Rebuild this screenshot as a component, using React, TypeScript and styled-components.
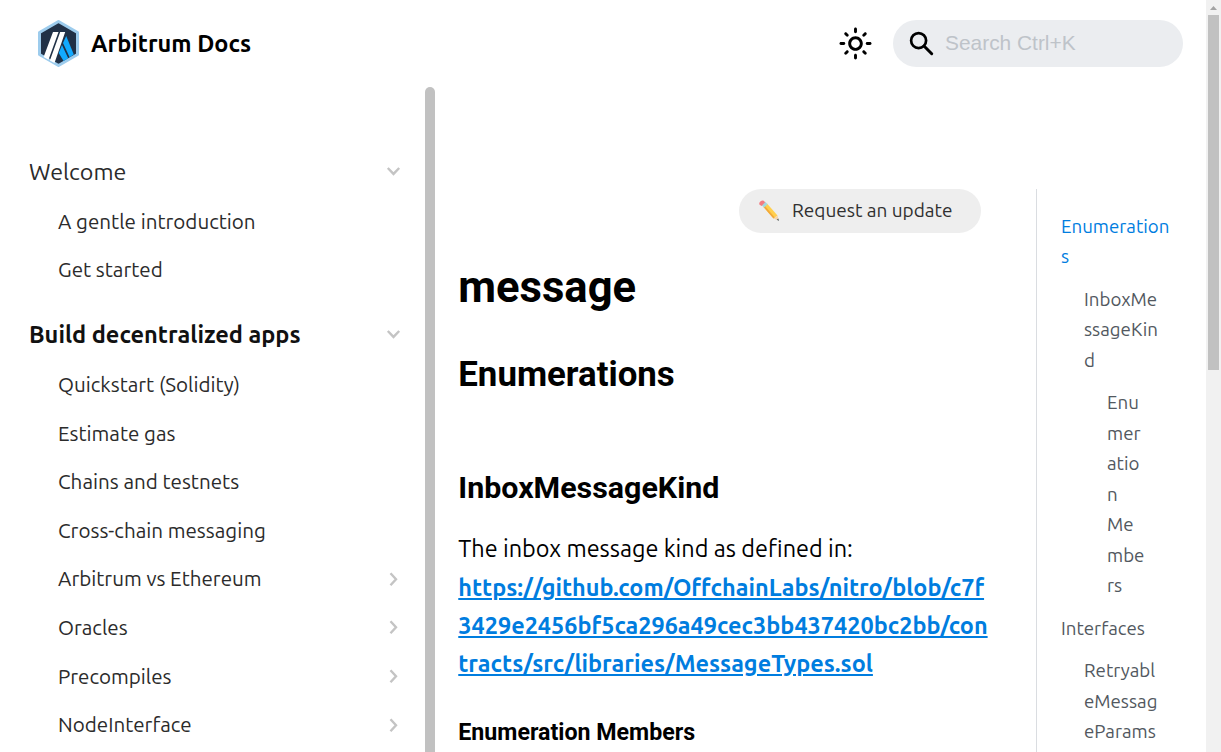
import React from "react";
import styled, { createGlobalStyle } from "styled-components";

const sans = `Ubuntu, "Noto Sans", sans-serif`;
const display = `Roboto, "Liberation Sans", sans-serif`;

const GlobalStyle = createGlobalStyle`
  *, *::before, *::after { box-sizing: border-box; }
  body { margin: 0; background: #fff; color: #000; font-family: ${sans}; overflow: hidden; }
`;

const Page = styled.div`
  display: grid;
  grid-template-columns: minmax(0, 1fr) 15px;
  height: 100vh;
  overflow: hidden;
`;
const Site = styled.div`
  display: flex;
  flex-direction: column;
  height: 100vh;
  min-width: 0;
`;
const Header = styled.header`
  display: flex;
  flex: none;
  align-items: center;
  height: 87px;
  padding: 0 23px 0 35px;
`;
const Brand = styled.a`
  display: flex;
  flex: 1;
  align-items: center;
  gap: 9px;
  font-size: 23.5px;
  font-weight: 700;
  color: #000;
`;
const BrandName = styled.span`
  padding-bottom: 2px;
`;
const ThemeButton = styled.button`
  display: flex;
  padding: 0;
  margin-right: 20px;
  border: 0;
  background: none;
`;
const Search = styled.label`
  display: flex;
  align-items: center;
  width: 290px;
  height: 47px;
  padding-left: 14px;
  gap: 9px;
  border-radius: 24px;
  background: #ebedf0;
`;
const SearchText = styled.span`
  padding-bottom: 1px;
  font: 20.9px/24px "Liberation Sans", Arial, sans-serif;
  color: #bec3c9;
`;

const Columns = styled.div`
  display: grid;
  grid-template-columns: 435px 601px minmax(0, 1fr);
  flex: 1;
  min-height: 0;
  overflow: hidden;
`;
const Sidebar = styled.nav`
  display: grid;
  grid-template-columns: minmax(0, 1fr) 10px;
  min-height: 0;
`;
const SidebarThumb = styled.div`
  border-radius: 5px 5px 0 0;
  background: #c1c1c1;
`;
const Menu = styled.div`
  padding: 60px 21px 0 29px;
  overflow: hidden;
`;
const Group = styled.section`
  margin-bottom: 16px;
`;
const GroupTitle = styled.div<{ $strong?: boolean }>`
  display: flex;
  align-items: center;
  justify-content: space-between;
  height: 50px;
  padding-bottom: 2px;
  font-size: ${(p) => (p.$strong ? 23.55 : 23.27)}px;
  font-weight: ${(p) => (p.$strong ? 700 : 400)};
  color: ${(p) => (p.$strong ? "#111" : "#2b2b2b")};
`;
const Entry = styled.div`
  display: flex;
  align-items: center;
  justify-content: space-between;
  height: 48.6px;
  padding-left: 29px;
  font-size: 20.6px;
  color: #2b2b2b;
`;

const Article = styled.main`
  padding: 102px 0 0 23.27px;
  min-width: 0;
`;
const UpdateRow = styled.div`
  display: flex;
  justify-content: flex-end;
  width: 522.73px;
`;
const UpdateButton = styled.a`
  display: flex;
  align-items: center;
  gap: 12px;
  width: 242px;
  height: 44px;
  padding: 0 0 1px 19px;
  border-radius: 22px;
  background: #eee;
  font-size: 19px;
  color: #303030;
`;
const UpdateLabel = styled.span`
  padding-bottom: 2px;
`;
const Title = styled.h1`
  margin: 27px 0 0;
  font: 700 43.6px/56px ${display};
`;
const Section = styled.h2`
  margin: 37px 0 0;
  font: 700 34.85px/44px ${display};
`;
const Subsection = styled.h3`
  margin: 72px 0 0;
  font: 700 30.4px/38px ${display};
`;
const Minor = styled.h4`
  margin: 35px 0 0;
  font: 700 23.2px/30px ${display};
`;
const Paragraph = styled.p`
  width: 533px;
  margin: 22.4px 0 0;
  font-size: 23.45px;
  line-height: 38.2px;
  word-break: break-all;
`;
const Link = styled.a`
  display: block;
  font-weight: 700;
  color: #007ddf;
  text-decoration: underline;
`;

const Contents = styled.aside`
  margin-top: 102px;
  padding: 22.7px 0 0 24px;
  border-left: 1px solid #dadde1;
  overflow: hidden;
`;
const ContentsLink = styled.a<{ $depth: number; $active?: boolean }>`
  display: block;
  margin: 0 0 12px ${(p) => p.$depth * 23}px;
  font-size: 18.7px;
  line-height: 30.5px;
  white-space: pre-line;
  color: ${(p) => (p.$active ? "#007ddf" : "#525860")};
`;

const Track = styled.div`
  display: flex;
  flex-direction: column;
  align-items: center;
  background: #f1f1f1;
`;
const TrackThumb = styled.div`
  width: 11px;
  height: 355px;
  background: #c1c1c1;
`;
const TrackArrow = styled.svg`
  flex: none;
  display: block;
`;

function Logo() {
  return (
    <svg width="47" height="49" viewBox="0 0 47 49">
      <path d="M23.500 2.500 42.500 13.500v22L23.500 46.500 4.500 35.500v-22z" fill="#213147" stroke="#9dcced" strokeWidth="3" strokeLinejoin="round" />
      <path d="M28 24 31.200 17 38.800 35.500 34.600 38.200z" fill="#12aaff" />
      <path d="M23.700 34 27 26 33.200 39.200 28.600 42z" fill="#12aaff" />
      <path d="M18 13H23.500L13.500 40.800 8.600 38zM25.200 13H30.200L19.500 44 14.900 41.500z" fill="#fff" />
    </svg>
  );
}

function Sun() {
  return (
    <svg width="35" height="35" viewBox="0 0 24 24" fill="currentColor">
      <path d="M12,9c1.650,0,3,1.350,3,3s-1.350,3-3,3s-3-1.350-3-3S10.350,9,12,9 M12,7c-2.760,0-5,2.240-5,5s2.240,5,5,5s5-2.240,5-5 S14.760,7,12,7L12,7z M2,13l2,0c0.550,0,1-0.450,1-1s-0.450-1-1-1l-2,0c-0.550,0-1,0.450-1,1S1.450,13,2,13z M20,13l2,0c0.550,0,1-0.450,1-1 s-0.450-1-1-1l-2,0c-0.550,0-1,0.450-1,1S19.450,13,20,13z M11,2v2c0,0.550,0.450,1,1,1s1-0.450,1-1V2c0-0.550-0.450-1-1-1S11,1.450,11,2z M11,20v2c0,0.550,0.450,1,1,1s1-0.450,1-1v-2c0-0.550-0.450-1-1-1C11.450,19,11,19.450,11,20z M5.990,4.580c-0.390-0.390-1.030-0.390-1.410,0 c-0.390,0.390-0.390,1.030,0,1.410l1.060,1.060c0.390,0.390,1.030,0.390,1.410,0s0.390-1.030,0-1.410L5.990,4.580z M18.360,16.950 c-0.390-0.390-1.030-0.390-1.410,0c-0.390,0.390-0.390,1.030,0,1.410l1.060,1.060c0.390,0.390,1.030,0.390,1.410,0c0.390-0.390,0.390-1.030,0-1.410 L18.360,16.950z M19.420,5.990c0.390-0.390,0.390-1.030,0-1.410c-0.390-0.390-1.030-0.390-1.410,0l-1.060,1.060c-0.390,0.390-0.390,1.030,0,1.410 s1.030,0.390,1.410,0L19.420,5.990z M7.050,18.360c0.390-0.390,0.390-1.030,0-1.410c-0.390-0.390-1.030-0.390-1.410,0l-1.060,1.060 c-0.390,0.390-0.390,1.030,0,1.410s1.030,0.390,1.410,0L7.050,18.360z" />
    </svg>
  );
}

function Magnifier() {
  return (
    <svg width="29" height="29" viewBox="0 0 29 29" fill="none" stroke="#000">
      <circle cx="11.600" cy="11.600" r="7.500" strokeWidth="2.700" />
      <path d="m17 17 7.700 7.700" strokeWidth="3" strokeLinecap="round" />
    </svg>
  );
}

function Chevron({ open }: { open?: boolean }) {
  return (
    <svg width="20" height="20" viewBox="0 0 20 20" fill="none" stroke="#c4c4c4" strokeWidth="2.400">
      <path d={open ? "m3.800 7 5.700 5.900 5.700-5.900" : "m6.500 4.200 5.500 6-5.500 6"} />
    </svg>
  );
}

function Pencil() {
  return (
    <svg width="22" height="22" viewBox="0 0 22 22">
      <path d="m5.500 7 3.500-3.500 10.500 12-4 3z" fill="#ffcf4d" />
      <path d="m5.500 7 1.300-1.300 10 11.700-1.300 1.100z" fill="#f2a83b" />
      <path d="m15.500 18.500 4-3 1.200 5z" fill="#f5d5ab" />
      <path d="m18.700 19.800 1.700-1.200.6 2.400z" fill="#56636b" />
      <path d="m3.700 5.200 3.500-3.500 2.400 2.500-3.500 3.300z" fill="#a3d7df" />
      <path d="M1.600 4.800Q.6 3 2.300 1.600T5.700.8L7.200 2.200 3.600 5.900Z" fill="#f27b82" />
    </svg>
  );
}

const groups = [
  { title: "Welcome", items: [["A gentle introduction"], ["Get started"]] },
  {
    title: "Build decentralized apps",
    strong: true,
    items: [
      ["Quickstart (Solidity)"],
      ["Estimate gas"],
      ["Chains and testnets"],
      ["Cross-chain messaging"],
      ["Arbitrum vs Ethereum", "more"],
      ["Oracles", "more"],
      ["Precompiles", "more"],
      ["NodeInterface", "more"],
    ],
  },
];

const contents = [
  { depth: 0, text: "Enumeration\ns", active: true },
  { depth: 1, text: "InboxMe\nssageKin\nd" },
  { depth: 2, text: "Enu\nmer\natio\nn\nMe\nmbe\nrs" },
  { depth: 0, text: "Interfaces" },
  { depth: 1, text: "Retryabl\neMessag\neParams" },
];

export default function App() {
  return (
    <Page>
      <GlobalStyle />
      <Site>
        <Header>
          <Brand>
            <Logo />
            <BrandName>Arbitrum Docs</BrandName>
          </Brand>
          <ThemeButton aria-label="Toggle theme">
            <Sun />
          </ThemeButton>
          <Search>
            <Magnifier />
            <SearchText>Search Ctrl+K</SearchText>
          </Search>
        </Header>
        <Columns>
          <Sidebar>
            <Menu>
              {groups.map((g) => (
                <Group key={g.title}>
                  <GroupTitle $strong={g.strong}>
                    {g.title}
                    <Chevron open />
                  </GroupTitle>
                  {g.items.map(([label, more]) => (
                    <Entry key={label}>
                      {label}
                      {more && <Chevron />}
                    </Entry>
                  ))}
                </Group>
              ))}
            </Menu>
            <SidebarThumb />
          </Sidebar>
          <Article>
            <UpdateRow>
              <UpdateButton>
                <Pencil />
                <UpdateLabel>Request an update</UpdateLabel>
              </UpdateButton>
            </UpdateRow>
            <Title>message</Title>
            <Section>Enumerations</Section>
            <Subsection>InboxMessageKind</Subsection>
            <Paragraph>
              The inbox message kind as defined in:
              <Link>
                https://github.com/OffchainLabs/nitro/blob/c7f3429e2456bf5ca296a49cec3bb437420bc2bb/contracts/src/libraries/MessageTypes.sol
              </Link>
            </Paragraph>
            <Minor>Enumeration Members</Minor>
          </Article>
          <Contents>
            {contents.map((c) => (
              <ContentsLink key={c.text} $depth={c.depth} $active={c.active}>
                {c.text}
              </ContentsLink>
            ))}
          </Contents>
        </Columns>
      </Site>
      <Track>
        <TrackArrow width="15" height="15" viewBox="0 0 15 15">
          <path d="M4 10h7L7.500 6z" fill="#a3a3a3" />
        </TrackArrow>
        <TrackThumb />
      </Track>
    </Page>
  );
}
